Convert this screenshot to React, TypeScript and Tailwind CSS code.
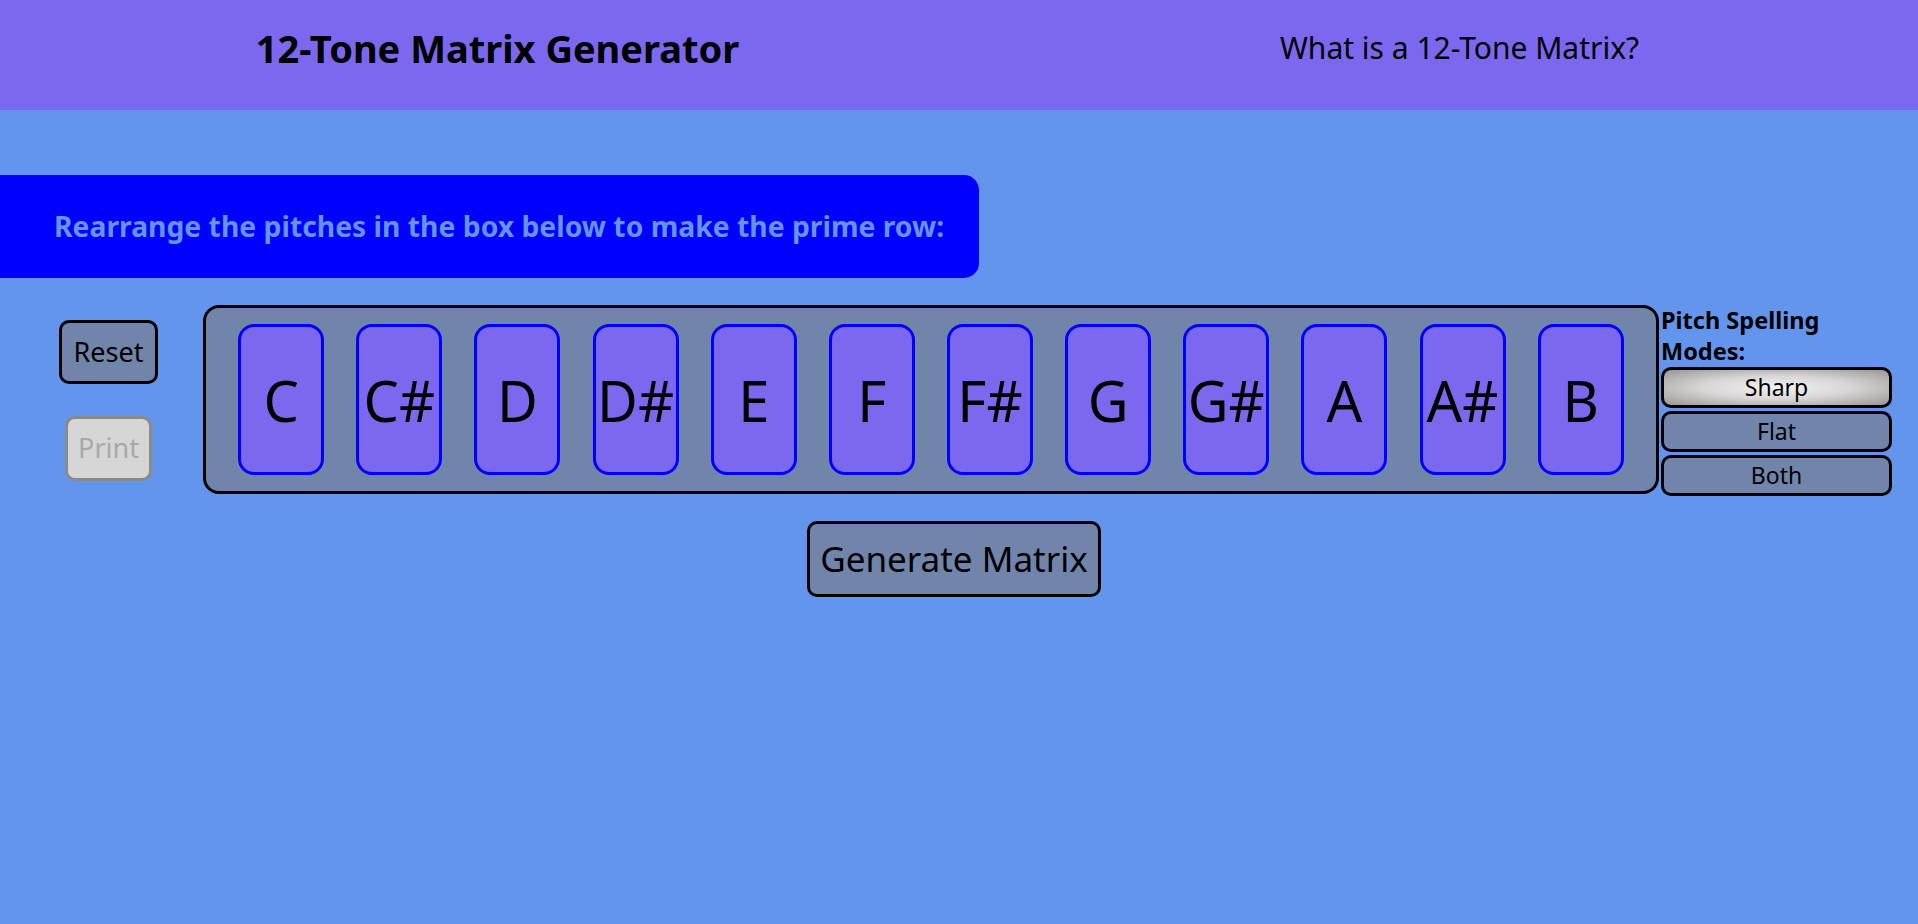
import { useState } from 'react';

const pitches = ['C', 'C#', 'D', 'D#', 'E', 'F', 'F#', 'G', 'G#', 'A', 'A#', 'B'];
const modes = ['Sharp', 'Flat', 'Both'];

export default function App() {
  const [mode, setMode] = useState('Sharp');

  return (
    <div className="h-[924px] bg-[#6495ed] font-['Noto_Sans',sans-serif] text-black">
      <header className="h-[110px] pb-[14px] bg-[#7b68ee] grid grid-cols-2 items-center">
        <h1 className="pl-[36px] text-center text-[38px] font-bold leading-none">12-Tone Matrix Generator</h1>
        <a className="pl-[42px] text-center text-[30px] leading-none">What is a 12-Tone Matrix?</a>
      </header>

      <div className="pt-[65px]">
        <div className="w-[979px] h-[103px] bg-[#0000ff] rounded-r-[15px] flex items-center pl-[54px]">
          <h2 className="text-[28.3px] font-bold text-[#6495ed]">
            Rearrange the pitches in the box below to make the prime row:
          </h2>
        </div>

        <div className="mt-[27px] flex items-start">
          <div className="w-[203px] pl-[14px] pt-[15px] flex flex-col items-center gap-[32px]">
            <button className="w-[99px] h-[64px] rounded-[10px] border-[3px] border-black bg-[#7185ab] text-[27px]">
              Reset
            </button>
            <button
              disabled
              className="w-[87px] h-[65px] rounded-[10px] border-[3px] border-[#8a8a8a] bg-[#d6d6d6] text-[27px] text-[#a8a8a8]"
            >
              Print
            </button>
          </div>

          <div className="w-[1456px] h-[189px] rounded-[16px] border-[3px] border-black bg-[#7185ab] flex items-center justify-evenly">
            {pitches.map((p) => (
              <div
                key={p}
                className="w-[86px] h-[151px] rounded-[16px] border-[3px] border-[#0000ff] bg-[#7b68ee] flex items-center justify-center text-[56px] leading-none"
              >
                {p}
              </div>
            ))}
          </div>

          <div className="w-[231px] ml-[2px]">
            <div className="text-[23.5px] leading-[31px] font-bold">
              Pitch Spelling
              <br />
              Modes:
            </div>
            <div className="flex flex-col gap-[3px]">
              {modes.map((m) => (
                <button
                  key={m}
                  onClick={() => setMode(m)}
                  className={
                    mode === m
                      ? 'h-[41px] rounded-[10px] border-[3px] border-black text-[23px] bg-[radial-gradient(ellipse_at_center,#f2f2f2_0%,#d9d7d7_45%,#9a9595_100%)]'
                      : 'h-[41px] rounded-[10px] border-[3px] border-black text-[23px] bg-[#7185ab]'
                  }
                >
                  {m}
                </button>
              ))}
            </div>
          </div>
        </div>

        <div className="mt-[25px] flex justify-center pr-[10px]">
          <button className="w-[294px] h-[76px] rounded-[10px] border-[3px] border-black bg-[#7185ab] text-[35px]">
            Generate Matrix
          </button>
        </div>
      </div>
    </div>
  );
}
